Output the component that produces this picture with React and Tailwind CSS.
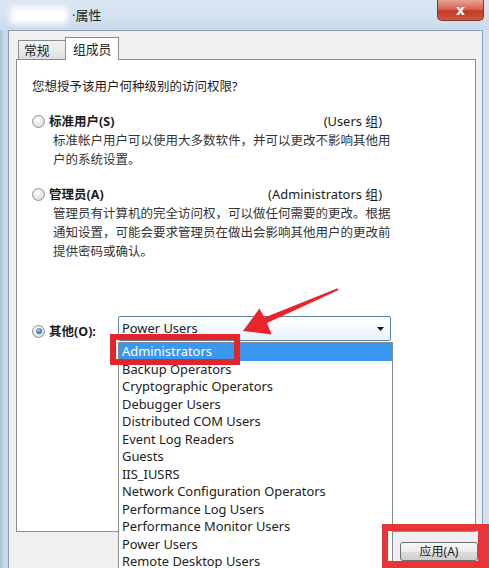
import React from "react";

const items = [
  "Administrators",
  "Backup Operators",
  "Cryptographic Operators",
  "Debugger Users",
  "Distributed COM Users",
  "Event Log Readers",
  "Guests",
  "IIS_IUSRS",
  "Network Configuration Operators",
  "Performance Log Users",
  "Performance Monitor Users",
  "Power Users",
  "Remote Desktop Users",
];

function Radio({ checked }) {
  return (
    <span className="w-[13px] h-[13px] rounded-full border border-[#8f9296] bg-[radial-gradient(circle_at_40%_35%,#ffffff_0%,#e6e6e6_55%,#cfcfcf_100%)] flex items-center justify-center shrink-0">
      {checked && (
        <span className="w-[6px] h-[6px] rounded-full bg-[radial-gradient(circle_at_40%_35%,#9fd0f5_0%,#2f6db3_70%,#1d4f8f_100%)]" />
      )}
    </span>
  );
}

export default function App() {
  return (
    <div className="w-[489px] h-[568px] overflow-hidden relative bg-[linear-gradient(90deg,#a9bdd2_0px,#c9d9ea_4px,#d3e1ef_100%)] font-['Noto_Sans','Noto_Sans_CJK_SC',sans-serif] text-[#1b1b1b]">
      {/* title bar */}
      <div className="h-[30px] flex items-center relative bg-[linear-gradient(180deg,#dbe6f1_0%,#d4e2f0_50%,#cbdbeb_100%)]">
        <div className="ml-[10px] w-[58px] h-[17px] bg-white blur-[3px] rounded" />
        <span className="ml-[4px] text-[13px] text-[#222] leading-none">·属性</span>
        <div className="flex-1" />
        <div className="mr-[5px] self-start w-[47px] h-[21px] rounded-b-[5px] border border-t-0 border-[#7a3a35] bg-[linear-gradient(180deg,#e9a397_0%,#d8644f_45%,#c23a24_55%,#d2543b_100%)] flex items-center justify-center">
          <span className="text-white font-bold text-[14px] leading-none font-['DejaVu_Sans',sans-serif]">x</span>
        </div>
      </div>

      {/* client area */}
      <div className="ml-[8px] w-[475px] h-[538px] bg-[#f0f0f0] border-t border-l border-r border-[#8c9db3] flex flex-col">
        {/* tabs */}
        <div className="h-[28px] flex items-end pl-[9px] text-[12.8px]">
          <div className="w-[48px] h-[19px] border border-b-0 border-[#898c95] bg-[linear-gradient(180deg,#f2f2f2_0%,#ebebeb_50%,#dcdcdc_100%)] pl-[5px] leading-[18px]">
            常规
          </div>
          <div className="w-[54px] h-[23px] -mb-px relative z-10 border border-b-0 border-[#898c95] bg-white pl-[7px] leading-[22px] -ml-px">
            组成员
          </div>
        </div>

        {/* panel */}
        <div className="ml-[7px] w-[460px] h-[473px] border border-[#898c95] bg-white pl-[15px] pt-[17px] text-[12.5px] leading-[19px] whitespace-nowrap">
          <div>您想授予该用户何种级别的访问权限?</div>

          <div className="mt-[16px] w-[350px] flex items-center justify-between">
            <div className="flex items-center gap-[4px]">
              <Radio />
              <span className="font-bold">标准用户(S)</span>
            </div>
            <span className="text-[12.9px]">(Users 组)</span>
          </div>
          <div className="pl-[21px] text-[#333]">
            标准帐户用户可以使用大多数软件，并可以更改不影响其他用
            <br />
            户的系统设置。
          </div>

          <div className="mt-[16px] w-[350px] flex items-center justify-between">
            <div className="flex items-center gap-[4px]">
              <Radio />
              <span className="font-bold">管理员(A)</span>
            </div>
            <span className="text-[12.9px]">(Administrators 组)</span>
          </div>
          <div className="pl-[21px] text-[#333]">
            管理员有计算机的完全访问权，可以做任何需要的更改。根据
            <br />
            通知设置，可能会要求管理员在做出会影响其他用户的更改前
            <br />
            提供密码或确认。
          </div>

          <div className="mt-[55px] flex items-center h-[25px]">
            <div className="flex items-center gap-[4px] w-[86px] mt-[5px]">
              <Radio checked />
              <span className="font-bold">其他(O):</span>
            </div>
            <div className="relative text-[12.9px]">
              <div className="w-[273px] h-[25px] rounded-[2px] border border-[#5f82aa] bg-[linear-gradient(180deg,#ffffff_0%,#f4f9fe_50%,#e6f1fc_100%)] flex items-center pl-[3px] pr-[6px]">
                <span className="flex-1 text-[#222]">Power Users</span>
                <svg width="7" height="4" viewBox="0 0 7 4">
                  <path d="M0 0 H7 L3.5 4 Z" fill="#111" />
                </svg>
              </div>
              <div className="absolute left-0 top-[26px] w-[275px] h-[240px] border border-[#8a8a8a] bg-white z-20">
                {items.map((t, i) => (
                  <div
                    key={t}
                    className={
                      i === 0
                        ? "h-[17.5px] leading-[17.5px] pl-[3px] bg-[#3a97f0] text-white"
                        : "h-[17.5px] leading-[17.5px] pl-[3px] text-[#222]"
                    }
                  >
                    {t}
                  </div>
                ))}
              </div>
            </div>
          </div>
        </div>

        {/* bottom buttons */}
        <div className="flex justify-end pr-[4px] pt-[10px]">
          <div className="w-[78px] h-[19px] rounded-[3px] border border-[#707070] bg-[linear-gradient(180deg,#f6f6f6_0%,#ebebeb_50%,#dddddd_51%,#cfcfcf_100%)] text-[12px] leading-[17px] text-center">
            应用(A)
          </div>
        </div>
      </div>

      {/* annotations */}
      <div className="absolute left-[110px] top-[334px] w-[130px] h-[31px] border-[6px] border-[#e3242b] z-30" />
      <div className="absolute left-[382px] top-[524px] w-[107px] h-[44px] border-l-[6px] border-t-[7px] border-r-[11px] border-b-[7px] border-[#e8353a] z-30" />
      <svg className="absolute left-0 top-0 z-30 pointer-events-none" width="489" height="568">
        <polygon
          points="243,331 259.4,308.5 264.6,317.5 337.6,288.2 338.6,290 267.0,323.0 271.6,334.5"
          fill="#e8252b"
        />
      </svg>
    </div>
  );
}
